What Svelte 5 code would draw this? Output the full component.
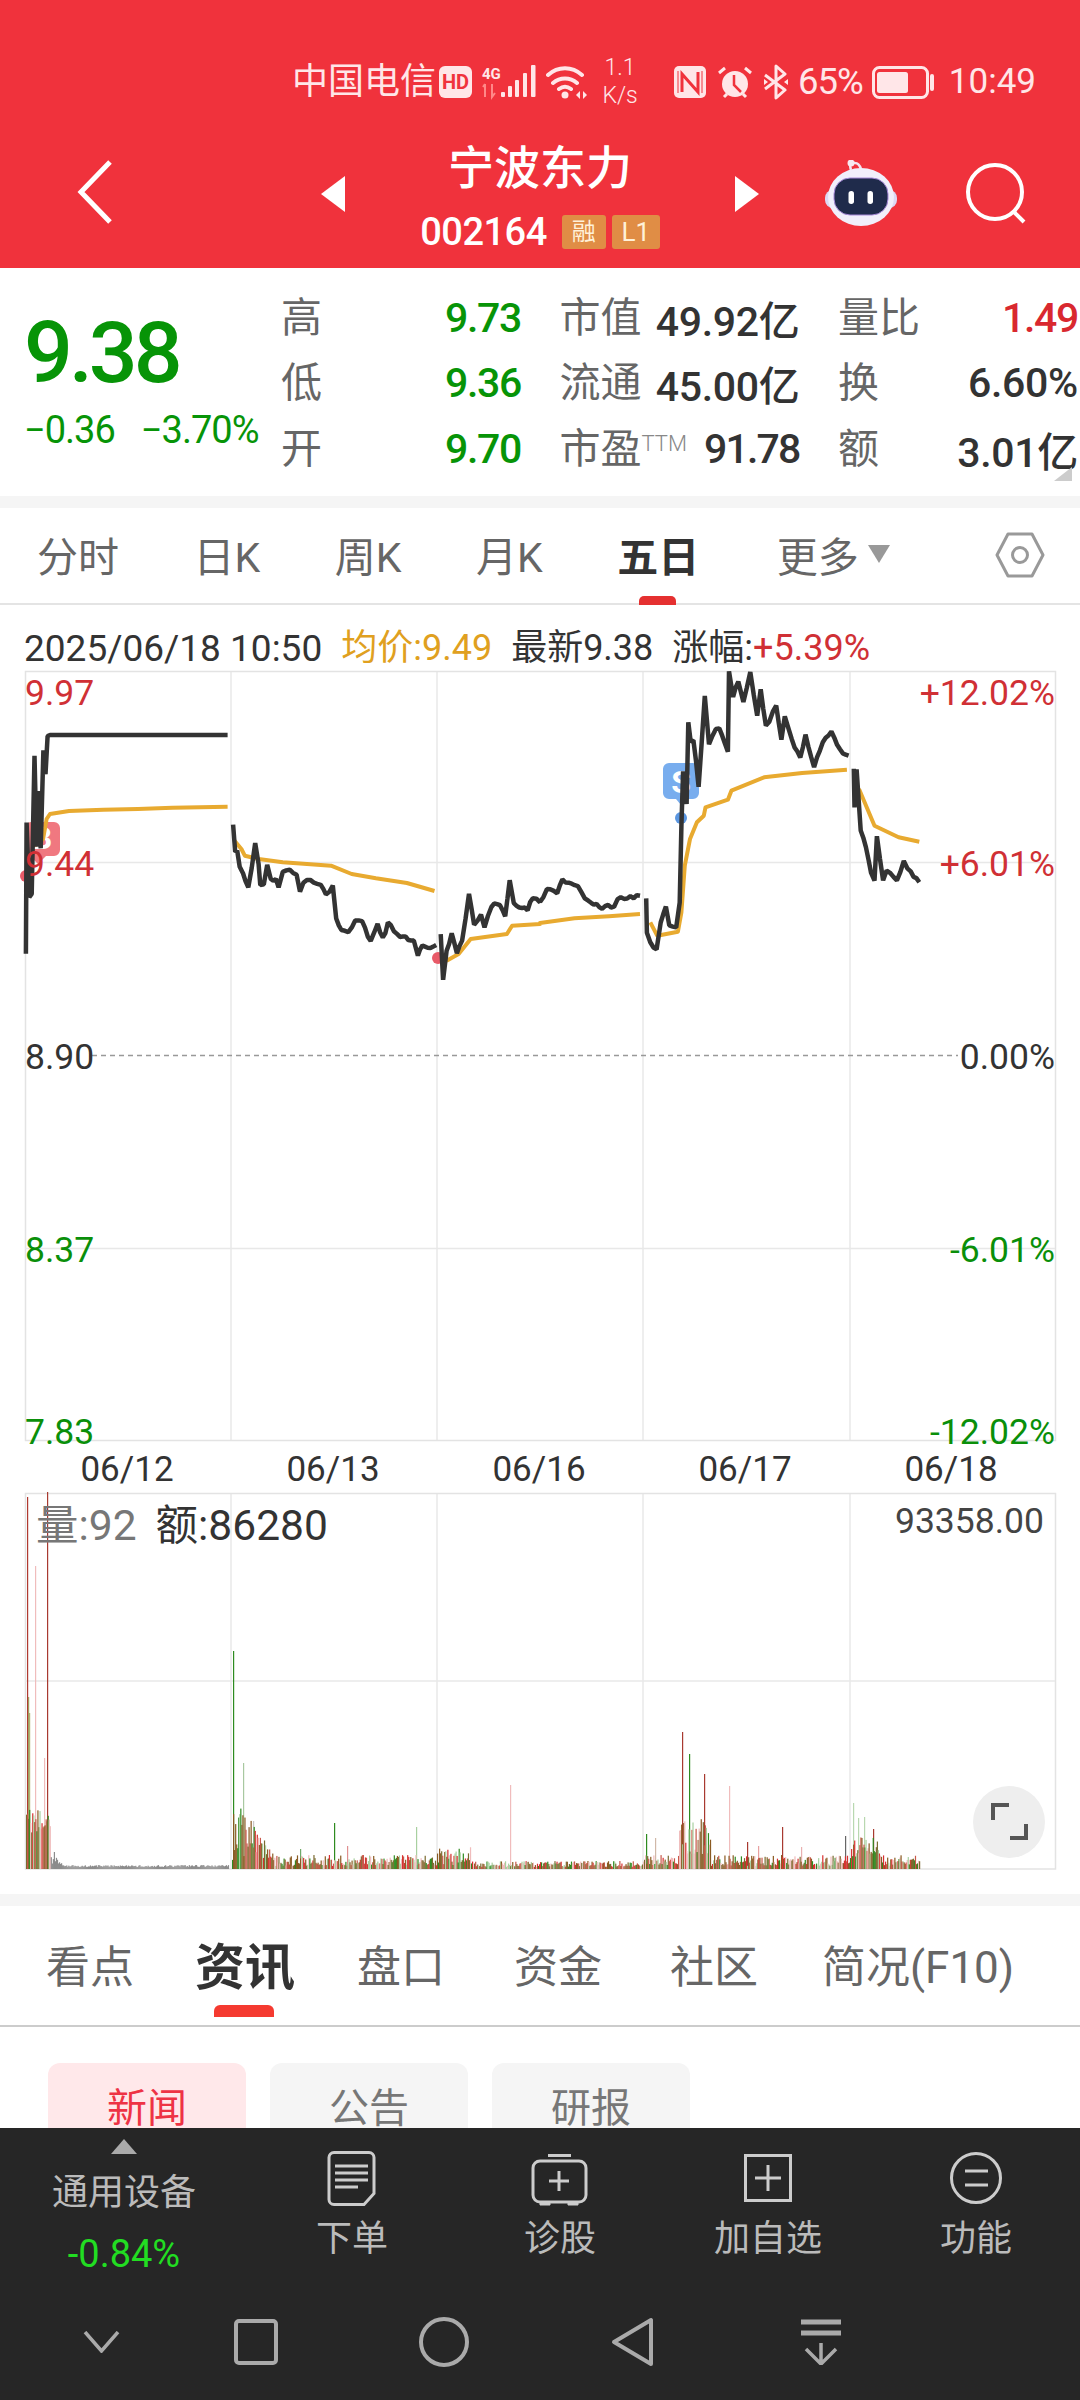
<script>
  const z3 = (a) => a.map(([x, y]) => `${(x / 2.9).toFixed(1)},${(660 + y / 3).toFixed(1)}`).join(' ');
  const z4 = (a) => a.map(([x, y]) => `${(540 + x / 2.9).toFixed(1)},${(660 + y / 3).toFixed(1)}`).join(' ');

  let seed = 20250618;
  const rnd = () => ((seed = (seed * 1664525 + 1013904223) >>> 0) / 4294967296);

  const jag = (s) => {
    const pts = s.trim().split(' ').map((p) => p.split(',').map(Number));
    const out = [];
    for (let i = 0; i < pts.length - 1; i++) {
      const [x0, y0] = pts[i];
      const [x1, y1] = pts[i + 1];
      const n = Math.max(1, Math.round(Math.abs(x1 - x0) / 3));
      for (let k = 0; k < n; k++) {
        const t = k / n;
        const flat = Math.abs(y1 - y0) < 0.5;
        const noise = flat ? 0 : (rnd() - 0.5) * 3.5;
        out.push(`${(x0 + (x1 - x0) * t).toFixed(1)},${(y0 + (y1 - y0) * t + noise).toFixed(1)}`);
      }
    }
    const last = pts[pts.length - 1];
    out.push(`${last[0]},${last[1]}`);
    return out.join(' ');
  };

  const black = [
    z3([[75,885],[77,490],[85,715],[92,700],[100,285],[106,560],[110,395],[118,570],[126,275],[132,350],[138,230],[145,228],[660,228]]),
    z3([[676,498],[682,580],[688,570],[695,625],[705,640],[712,670],[720,690],[730,630],[740,553],[750,620],[755,680],[765,675],[775,620],[785,660],[800,665],[808,690],[820,635],[840,630],[860,650],[870,700],[880,670],[900,665],[930,675],[945,710],[965,685],[975,780],[990,815],[1010,820],[1030,790],[1050,785],[1075,850],[1095,795],[1110,840],[1125,795],[1160,830],[1200,845],[1212,885],[1225,860],[1240,870],[1265,858]]),
    z3([[1278,825],[1285,960],[1295,880],[1310,825],[1325,885],[1340,840],[1360,708],[1375,795],[1395,770],[1405,800],[1425,740],[1450,735],[1465,775],[1478,662],[1490,735],[1530,750],[1545,715],[1566,730]]) + ' ' +
      z4([[0,730],[20,690],[50,700],[65,665],[110,680],[140,730],[180,745],[215,740],[225,720],[290,710]]),
    z4([[308,715],[310,820],[320,850],[338,872],[350,795],[365,745],[375,800],[395,810],[405,730],[410,500],[415,340],[425,430],[430,190],[437,250],[445,240],[460,380],[478,115],[490,260],[510,210],[520,210],[545,280],[548,40],[560,110],[575,65],[590,130],[610,40],[630,170],[640,90],[655,205],[685,140],[700,245],[710,170],[730,240],[755,300],[770,225],[795,325],[820,250],[845,220],[870,275],[895,290]]),
    z4([[910,330],[912,450],[918,330],[930,510],[945,560],[960,640],[970,670],[977,535],[995,665],[1005,630],[1035,665],[1055,610],[1075,640],[1100,670]])
  ].map(jag);
  const avg = [
    z3([[100,560],[125,540],[135,480],[145,465],[200,456],[300,452],[400,450],[500,446],[660,443]]),
    z3([[680,545],[700,570],[710,590],[750,600],[820,610],[960,620],[1020,645],[1090,658],[1180,672],[1260,696]]),
    z3([[1295,905],[1330,885],[1365,840],[1470,825],[1485,800],[1566,795]]) + ' ' + z4([[0,792],[100,778],[200,772],[290,765]]),
    z4([[320,790],[340,830],[400,818],[410,760],[420,620],[435,540],[455,490],[475,470],[480,445],[545,422],[555,395],[650,355],[760,342],[890,332]]),
    z4([[925,390],[970,500],[1040,535],[1100,548]])
  ];

  const palette = ['#d83030', '#2e8b20', '#8a5a22', '#f0bcbc', '#a8d0a0', '#7a6a30', '#c8584a', '#8a5a22'];
  const envelope = (x) => {
    if (x < 50) return [35, 60];
    if (x < 62) return [4, 24 - (x - 50) * 1.6];
    if (x < 228) return [2, 4];
    if (x < 232) return [0, 0];
    if (x < 275) return [8, Math.max(14, 75 - (x - 233) * 1.5)];
    if (x < 436) return [3, 14];
    if (x < 470) return [4, 22];
    if (x < 642) return [2, 8];
    if (x < 678) return [4, 14];
    if (x < 710) return [14, 50];
    if (x < 850) return [3, 14];
    if (x < 880) return [12, 32];
    return [3, 14];
  };
  const bars = [];
  for (let x = 26; x < 920; x += 1.03) {
    const [lo, hi] = envelope(x);
    const h = lo + rnd() * (hi - lo);
    const gray = x >= 50 && x < 228;
    const c = gray ? '#8c8c8c' : palette[Math.floor(rnd() * palette.length)];
    if (h > 0) bars.push({ x, y: 1869 - h, h, c });
  }
  const spikes = [
    [27,1497,'#b03a30'],[47,1492,'#a83a30'],[35,1566,'#f0bcbc'],[44,1758,'#f0bcbc'],[28,1697,'#a0a060'],[29,1713,'#b0b070'],
    [233,1651,'#2e8b20'],[243,1763,'#a8c8a0'],[253,1821,'#c8c8c8'],[334,1823,'#2e8b20'],[416,1827,'#a8d0a0'],[510,1785,'#f0bcbc'],[347,1846,'#e09090'],[300,1849,'#70a868'],
    [682,1732,'#a83a30'],[689,1754,'#2e8b20'],[704,1774,'#a83a30'],[729,1786,'#f0bcbc'],[782,1827,'#a83a30'],[747,1842,'#a83a30'],[758,1846,'#e8a0a0'],[801,1847,'#e8b0b0'],
    [853,1803,'#b8d8b0'],[858,1818,'#b8d8b0'],[864,1817,'#b8d8b0'],[873,1829,'#a83a30'],[845,1836,'#666'],[646,1834,'#2e8b20'],[655,1838,'#d0b8a8']
  ];
  const stats = [
    { l: '高', v: '9.73', c: 'up' }, { l: '市值', v: '49.92亿', c: '' }, { l: '量比', v: '1.49', c: 'red' },
    { l: '低', v: '9.36', c: 'up' }, { l: '流通', v: '45.00亿', c: '' }, { l: '换', v: '6.60%', c: '' },
    { l: '开', v: '9.70', c: 'up' }, { l: '市盈', s: 'TTM', v: '91.78', c: 'tight' }, { l: '额', v: '3.01亿', c: '' }
  ];
  const dates = ['06/12', '06/13', '06/16', '06/17', '06/18'];
  const vgrid = [231, 437, 643, 850];
</script>

<div class="page">
  <header class="head">
    <div class="status">
      <span class="carrier">中国电信</span>
      <svg class="s-hd" width="33" height="32" viewBox="0 0 33 32"><rect width="33" height="32" rx="6" fill="#ffe6e8"/><text x="16.5" y="23" text-anchor="middle" class="hd">HD</text></svg>
      <svg class="s-sig" width="56" height="36" viewBox="482 62 56 36">
        <text x="483" y="77" class="fg">4G</text>
        <path d="M486 82v13M484 85l2-3M493 82v13l3-4" stroke="#f88" stroke-width="2" fill="none"/>
        <g fill="#ffe6e8"><rect x="502" y="90" width="4" height="5" rx="1"/><rect x="509" y="84" width="4" height="11" rx="1"/><rect x="516" y="78" width="4" height="17" rx="1"/><rect x="524" y="71" width="4" height="24" rx="1"/><rect x="532" y="63" width="4.5" height="32" rx="1"/></g>
      </svg>
      <svg class="s-wifi" width="42" height="34" viewBox="546 62 42 34">
        <path d="M548 72c10-9 24-9 34 0M553 80c7-6 17-6 24 0M559 86c4-3 8-3 12 0" stroke="#ffe6e8" stroke-width="4" fill="none" stroke-linecap="round"/>
        <circle cx="565" cy="92" r="3.5" fill="#ffe6e8"/>
        <path d="M576 92l4-4v8zM587 92l-4-4v8z" fill="#ffe6e8"/>
      </svg>
      <span class="speed"><span>1.1</span><span>K/s</span></span>
      <svg class="s-nfc" width="32" height="32" viewBox="0 0 32 32"><rect width="32" height="32" rx="5" fill="#ffe6e8"/><path d="M8 26V8l16 18V6" stroke="#f0323c" stroke-width="3" fill="none"/><path d="M4 5v22M28 5v22" stroke="#f0323c" stroke-width="1"/></svg>
      <svg class="s-alarm" width="36" height="33" viewBox="0 0 36 33">
        <circle cx="18" cy="18" r="13" fill="#ffe6e8"/>
        <path d="M17 9v10l7 7" stroke="#f0323c" stroke-width="2.5" fill="none"/>
        <path d="M2 7l6-5M34 7l-6-5M7 31l3-3M29 31l-3-3" stroke="#ffe6e8" stroke-width="3" fill="none"/>
      </svg>
      <svg class="s-bt" width="26" height="36" viewBox="0 0 26 36"><path d="M2 11l20 15-9 8V2l9 8-20 15" stroke="#ffe6e8" stroke-width="3" fill="none" stroke-linejoin="round"/><path d="M1 15l4 3-4 3zM25 15l-4 3 4 3z" fill="#ffe6e8"/></svg>
      <span class="pct">65%</span>
      <svg class="s-bat" width="62" height="33" viewBox="0 0 62 33"><rect x="1.5" y="1.5" width="54" height="30" rx="6" fill="none" stroke="#ffe6e8" stroke-width="3"/><rect x="5" y="6" width="31" height="21" rx="2.5" fill="#ffe6e8"/><rect x="58" y="8" width="4" height="17" rx="2" fill="#ffe6e8"/></svg>
      <span class="time">10:49</span>
    </div>
    <div class="nav">
      <svg class="back" width="36" height="64" viewBox="0 0 36 64"><path d="M33 2L4 32l29 30" stroke="#fff" stroke-width="5" fill="none"/></svg>
      <svg class="tri-l" width="24" height="36" viewBox="0 0 24 36"><path d="M24 0v36L0 18z" fill="#fff"/></svg>
      <div class="title">
        <div class="name">宁波东力</div>
        <div class="code"><span class="num">002164</span><span class="tag tag-a">融</span><span class="tag tag-b">L1</span></div>
      </div>
      <svg class="tri-r" width="24" height="36" viewBox="0 0 24 36"><path d="M0 0v36l24-18z" fill="#fff"/></svg>
      <svg class="robot" width="72" height="66" viewBox="825 160 72 66">
        <path d="M851 170c-2-6 0-8 4-7 3 0 5 3 6 6" stroke="#f4e4f0" stroke-width="2.5" fill="none"/>
        <circle cx="851" cy="163" r="3.5" fill="#f8e8f0"/>
        <rect x="825" y="190" width="72" height="18" rx="8" fill="#dcd8f4"/>
        <ellipse cx="861" cy="197" rx="33" ry="29" fill="#f1effb"/>
        <rect x="834" y="178" width="54" height="37" rx="16" fill="#1f2b4b" stroke="#a78ad8" stroke-width="1"/>
        <rect x="848.5" y="191" width="5.5" height="13" rx="2.7" fill="#fff"/>
        <rect x="867.5" y="191" width="5.5" height="13" rx="2.7" fill="#fff"/>
      </svg>
      <svg class="search" width="64" height="66" viewBox="962 162 64 66"><circle cx="995" cy="193" r="27" stroke="#fff" stroke-width="4" fill="none"/><path d="M1013 212l11 11" stroke="#fff" stroke-width="4"/></svg>
    </div>
  </header>

  <section class="quote">
    <div class="price">
      <div class="big">9.38</div>
      <div class="delta"><span>−0.36</span><span>−3.70%</span></div>
    </div>
    <div class="stats">
      {#each stats as s}
        <div class="stat">
          <span class="lab">{s.l}{#if s.s}<sup>{s.s}</sup>{/if}</span>
          <span class="val {s.c}">{s.v}</span>
        </div>
      {/each}
    </div>
    <svg class="corner" width="18" height="14" viewBox="0 0 18 14"><path d="M18 0v14H0z" fill="#ccc"/></svg>
  </section>
  <div class="gap"></div>

  <nav class="tabs">
    <span class="tab">分时</span>
    <span class="tab">日K</span>
    <span class="tab">周K</span>
    <span class="tab">月K</span>
    <span class="tab on">五日</span>
    <span class="tab more">更多<svg width="22" height="18" viewBox="0 0 22 18"><path d="M0 0h22L11 18z" fill="#999"/></svg></span>
    <svg class="hex" width="50" height="46" viewBox="995 533 50 46"><path d="M1008 535h24l11 21-11 21h-24l-11-21z" fill="none" stroke="#999" stroke-width="3" stroke-linejoin="round"/><circle cx="1020" cy="556" r="7.5" fill="none" stroke="#999" stroke-width="3"/></svg>
  </nav>

  <div class="info">
    <span class="dark stamp">2025/06/18 10:50</span>
    <span class="gold">均价:9.49</span>
    <span class="dark">最新9.38</span>
    <span class="dark">涨幅:<span class="red">+5.39%</span></span>
  </div>

  <div class="chart">
    <svg width="1031" height="770" viewBox="25 672 1031 770">
      <rect x="25.5" y="672.5" width="1030" height="769" fill="none" stroke="#e3e3e3" stroke-width="1.5"/>
      {#each vgrid as x}<line x1={x} x2={x} y1="672" y2="1441" stroke="#e3e3e3" stroke-width="1.2"/>{/each}
      <line x1="25" x2="1055" y1="863.5" y2="863.5" stroke="#e8e8e8" stroke-width="1.5"/>
      <line x1="25" x2="1055" y1="1249.5" y2="1249.5" stroke="#e8e8e8" stroke-width="1.5"/>
      <line x1="92" x2="958" y1="1056.5" y2="1056.5" stroke="#999" stroke-width="1.5" stroke-dasharray="5 4"/>

      <path d="M31 823h23a6 6 0 0 1 6 6v22a6 6 0 0 1-6 6H46l-8 8-8-8h-5v-28a6 6 0 0 1 6-6z" fill="#f07880"/>
      <text x="42" y="850" class="mark">B</text>
      <circle cx="26" cy="877" r="6" fill="#e85a68"/>
      <circle cx="438" cy="959" r="6" fill="#e85a68"/>
      <path d="M669 764h24a6 6 0 0 1 6 6v24a6 6 0 0 1-6 6h-7l-5 6-5-6h-7a6 6 0 0 1-6-6v-24a6 6 0 0 1 6-6z" fill="#78adee"/>
      <text x="681" y="794" class="mark">S</text>
      <circle cx="681" cy="819" r="6" fill="#5a96e0"/>

      {#each avg as p}<polyline points={p} fill="none" stroke="#e8aa30" stroke-width="4" stroke-linejoin="round"/>{/each}
      {#each black as p}<polyline points={p} fill="none" stroke="#333" stroke-width="4.500" stroke-linejoin="bevel"/>{/each}
    </svg>
    <span class="lbl l y1 red">9.97</span>
    <span class="lbl l y2 red">9.44</span>
    <span class="lbl l y3 dark">8.90</span>
    <span class="lbl l y4 up">8.37</span>
    <span class="lbl l y5 up">7.83</span>
    <span class="lbl r y1 red">+12.02%</span>
    <span class="lbl r y2 red">+6.01%</span>
    <span class="lbl r y3 dark">0.00%</span>
    <span class="lbl r y4 up">-6.01%</span>
    <span class="lbl r y5 up">-12.02%</span>
  </div>

  <div class="dates">
    {#each dates as d}<span>{d}</span>{/each}
  </div>

  <div class="vol">
    <svg width="1031" height="378" viewBox="25 1492 1031 378">
      <rect x="25.5" y="1493.5" width="1030" height="375.5" fill="none" stroke="#e3e3e3" stroke-width="1.5"/>
      {#each vgrid as x}<line x1={x} x2={x} y1="1493" y2="1869" stroke="#e3e3e3" stroke-width="1.2"/>{/each}
      <line x1="25" x2="1055" y1="1681" y2="1681" stroke="#e8e8e8" stroke-width="1.5"/>
      {#each spikes as s}<rect x={s[0]} y={s[1]} width="1.2" height={1869 - s[1]} fill={s[2]}/>{/each}
      {#each bars as b}<rect x={b.x} y={b.y} width="1.2" height={b.h} fill={b.c}/>{/each}
    </svg>
    <div class="vtext"><span class="grey">量:92</span><span class="dark">额:86280</span></div>
    <span class="vmax">93358.00</span>
    <button class="expand" aria-label="expand">
      <svg width="40" height="38" viewBox="990 1804 40 38"><path d="M994 1821v-15h16M1027 1825v14h-16" fill="none" stroke="#555" stroke-width="4"/></svg>
    </button>
  </div>
  <div class="gap second"></div>

  <nav class="tabs2">
    <span class="tb">看点</span>
    <span class="tb on">资讯</span>
    <span class="tb">盘口</span>
    <span class="tb">资金</span>
    <span class="tb">社区</span>
    <span class="tb">简况(F10)</span>
  </nav>

  <div class="chips">
    <span class="chip act">新闻</span>
    <span class="chip">公告</span>
    <span class="chip">研报</span>
  </div>

  <footer class="bar">
    <div class="actions">
      <div class="sector">
        <svg width="26" height="15" viewBox="0 0 26 15"><path d="M13 0l13 15H0z" fill="#aaa"/></svg>
        <span class="sname">通用设备</span>
        <span class="schg">-0.84%</span>
      </div>
      <div class="act-item">
        <svg width="50" height="56" viewBox="328 2152 50 56"><path d="M335 2153.5h35a5 5 0 0 1 5 5v36l-10 11h-30a5 5 0 0 1-5-5v-42a5 5 0 0 1 5-5z" fill="none" stroke="#ccc" stroke-width="3"/><path d="M336 2167h33M336 2174h33M336 2181h33M336 2188h23" stroke="#ccc" stroke-width="3"/></svg>
        <span>下单</span>
      </div>
      <div class="act-item">
        <svg width="60" height="56" viewBox="530 2152 60 56"><rect x="533" y="2162" width="53" height="41" rx="7" fill="none" stroke="#ccc" stroke-width="3"/><path d="M548 2156.5h23M559 2172v20M549 2182h20" stroke="#ccc" stroke-width="3"/><path d="M540 2203h10v3h-10zM568 2203h10v3h-10z" fill="#ccc" stroke="#ccc"/></svg>
        <span>诊股</span>
      </div>
      <div class="act-item">
        <svg width="50" height="56" viewBox="742 2152 50 56"><rect x="744.5" y="2156.5" width="45" height="45" fill="none" stroke="#ccc" stroke-width="3"/><path d="M767 2166v26M754 2179h26" stroke="#ccc" stroke-width="3"/></svg>
        <span>加自选</span>
      </div>
      <div class="act-item">
        <svg width="54" height="56" viewBox="948 2152 54 56"><circle cx="975" cy="2179" r="24.5" fill="none" stroke="#ccc" stroke-width="3"/><path d="M964 2172h23M964 2186h23" stroke="#ccc" stroke-width="3"/></svg>
        <span>功能</span>
      </div>
    </div>
    <div class="sysnav">
      <svg class="n1" width="37" height="22" viewBox="0 0 37 22"><path d="M2 1l16.500 19L35 1" fill="none" stroke="#aaa" stroke-width="3.500"/></svg>
      <svg class="n2" width="44" height="46" viewBox="0 0 44 46"><rect x="2" y="2" width="40" height="42" rx="3" fill="none" stroke="#aaa" stroke-width="4"/></svg>
      <svg class="n3" width="50" height="50" viewBox="0 0 50 50"><circle cx="25" cy="25" r="23" fill="none" stroke="#aaa" stroke-width="4"/></svg>
      <svg class="n4" width="42" height="50" viewBox="0 0 42 50"><path d="M40 3v44L3 25z" fill="none" stroke="#aaa" stroke-width="4" stroke-linejoin="round"/></svg>
      <svg class="n5" width="42" height="46" viewBox="0 0 42 46"><path d="M1 3h40M1 14h40" stroke="#aaa" stroke-width="5"/><path d="M21 24v21M6 30l15 15 15-15" fill="none" stroke="#aaa" stroke-width="3.500"/></svg>
    </div>
  </footer>
</div>

<style>
  :global(body) { margin: 0; background: #fff; }
  .page {
    width: 1080px; height: 2400px; overflow: hidden; position: relative;
    display: flex; flex-direction: column;
    font-family: Roboto, "Noto Sans CJK SC", sans-serif;
    color: #333;
  }
  .head { background: #f0323c; height: 268px; flex: none; color: #fff; }
  .status { height: 120px; padding: 44px 44px 0 0; box-sizing: border-box; display: flex; justify-content: flex-end; align-items: center; color: #ffe6e8; }
  .carrier { font-size: 36px; line-height: 40px; margin-right: 3px; }
  .hd { font: 700 20px Roboto, sans-serif; fill: #f0323c; }
  .fg { font: 700 15px Roboto, sans-serif; fill: #ffe6e8; }
  .s-sig { margin-left: 9px; }
  .s-wifi { margin-left: 9px; }
  .speed { display: flex; flex-direction: column; align-items: center; font-size: 23px; line-height: 28px; margin-left: 12px; width: 40px; font-weight: 300; }
  .s-nfc { margin-left: 34px; }
  .s-alarm { margin-left: 11px; }
  .s-bt { margin-left: 10px; }
  .pct { font-size: 36.500px; line-height: 40px; margin-left: 9px; letter-spacing: -1px; }
  .s-bat { margin-left: 9px; }
  .time { font-size: 35px; line-height: 40px; margin-left: 15px; }

  .nav { height: 148px; display: flex; align-items: center; position: relative; }
  .back { margin-left: 77px; margin-top: -4px; }
  .tri-l { margin-left: 208px; }
  .title { width: 390px; display: flex; flex-direction: column; align-items: center; align-self: flex-start; margin-top: 20px; }
  .name { font-size: 46px; line-height: 56px; font-weight: 500; }
  .code { display: flex; align-items: center; height: 40px; margin-top: 16px; }
  .num { font-size: 38px; font-weight: 500; letter-spacing: -0.5px; margin-right: 15px; }
  .tag { background: #e08d45; color: #fff1d8; font-size: 26px; height: 34px; line-height: 34px; text-align: center; border-radius: 3px; }
  .tag-a { width: 44px; font-size: 24px; }
  .tag-b { width: 48px; margin-left: 6px; }
  .robot { margin-left: 66px; margin-top: -2px; }
  .search { margin-left: 65px; }

  .quote { height: 228px; flex: none; position: relative; display: flex; box-sizing: border-box; }
  .price { width: 281px; padding-left: 24px; box-sizing: border-box; flex: none; }
  .big { font-size: 86px; font-weight: 500; line-height: 90px; letter-spacing: -4px; color: #079407; margin-top: 40px; }
  .delta { display: flex; gap: 26px; font-size: 38px; line-height: 44px; color: #079407; margin-top: 10px; letter-spacing: -1px; white-space: nowrap; }
  .stats { display: grid; grid-template-columns: 240px 240px 240px; column-gap: 38.500px; grid-auto-rows: 65.500px; padding-top: 17px; }
  .stat { display: flex; justify-content: space-between; align-items: center; white-space: nowrap; }
  .lab { font-size: 41px; color: #666; line-height: 50px; position: relative; }
  .lab sup { font-size: 22px; color: #888; font-weight: 300; vertical-align: 12px; line-height: 0; }
  .val { font-size: 41px; font-weight: 500; color: #333; letter-spacing: -0.300px; }
  .val.up, .val.red { letter-spacing: -1.300px; }
  .val.tight { letter-spacing: -1.800px; }
  .val.up { color: #079407; }
  .val.red { color: #d9282f; }
  .corner { position: absolute; right: 8px; top: 199px; }

  .gap { height: 12px; background: #f5f5f5; flex: none; }
  .gap.second { margin-top: 25px; }

  .tabs { height: 97px; flex: none; box-sizing: border-box; border-bottom: 2px solid #e4e4e4; display: flex; align-items: center; padding: 5px 0 0 37px; gap: 74.500px; position: relative; }
  .tab { font-size: 41px; color: #666; position: relative; line-height: 50px; display: flex; align-items: center; white-space: nowrap; }
  .tab.on { color: #333; font-weight: 700; }
  .tab.on::after { content: ""; position: absolute; left: 22px; bottom: -22px; width: 37px; height: 9px; border-radius: 5px 5px 0 0; background: #e53030; }
  .tab.more { margin-left: 3px; }
  .tab.more svg { margin-left: 9px; margin-top: -8px; }
  .hex { position: absolute; right: 35px; top: 24px; }

  .info { height: 66px; flex: none; display: flex; align-items: flex-end; padding: 0 0 0 24px; gap: 19px; font-size: 36px; line-height: 45px; white-space: nowrap; box-sizing: border-box; }
  .stamp { font-size: 37px; }
  .dark { color: #333; }
  .gold { color: #e0a020; }
  .red { color: #d03035; }
  .up { color: #0a8f0a; }

  .chart { position: relative; margin-left: 25px; width: 1031px; height: 770px; flex: none; }
  .chart svg, .vol svg { display: block; overflow: visible; }
  .mark { font: 700 32px Roboto, sans-serif; fill: #fff; text-anchor: middle; }
  .lbl { position: absolute; font-size: 35.500px; line-height: 40px; white-space: nowrap; }
  .lbl.l { left: 0; }
  .lbl.r { right: 1px; }
  .y1 { top: 2px; }
  .y2 { top: 173px; }
  .y3 { top: 366px; }
  .y4 { top: 559px; }
  .y5 { top: 741px; }
  .dates { height: 51px; flex: none; display: grid; grid-template-columns: repeat(5, 206px); padding-left: 24px; font-size: 35px; line-height: 58px; color: #333; text-align: center; }

  .vol { position: relative; margin-left: 25px; width: 1031px; height: 377px; flex: none; }
  .vtext { position: absolute; left: 11px; top: 10px; display: flex; gap: 19px; font-size: 42.500px; line-height: 48px; }
  .grey { color: #777; }
  .vmax { position: absolute; right: 12px; top: 7px; font-size: 35.500px; line-height: 44px; color: #444; }
  .expand { position: absolute; left: 948px; top: 294px; width: 72px; height: 72px; border-radius: 50%; background: #eee; border: 0; padding: 0; display: flex; align-items: center; justify-content: center; }

  .tabs2 { height: 121px; flex: none; box-sizing: border-box; border-bottom: 2px solid #ccc; display: flex; align-items: center; padding: 5px 0 0 46px; position: relative; }
  .tb { font-size: 44px; color: #666; line-height: 60px; position: relative; white-space: nowrap; margin-right: 66px; }
  .tb:nth-child(1) { margin-right: 61px; }
  .tb:nth-child(3) { margin-right: 69px; }
  .tb:nth-child(4) { margin-right: 68px; }
  .tb:nth-child(5) { margin-right: 64px; }
  .tb.on { font-size: 50px; font-weight: 700; color: #333; margin-right: 62px; }
  .tb.on::after { content: ""; position: absolute; left: 19px; top: 67px; width: 60px; height: 12px; background: #f53a30; border-radius: 6px 6px 0 0; }

  .chips { height: 101px; flex: none; overflow: hidden; display: flex; gap: 24px; padding: 36px 0 0 48px; box-sizing: border-box; }
  .chip { width: 198px; height: 100px; border-radius: 12px; background: #f5f5f5; color: #777; font-size: 40px; text-align: center; line-height: 92px; flex: none; }
  .chip.act { background: #ffe8ea; color: #ee3344; }

  .bar { flex: 1; background: #262626; display: flex; flex-direction: column; color: #bbb; }
  .actions { height: 161px; display: grid; grid-template-columns: 248px repeat(4, 208px); flex: none; }
  .sector { display: flex; flex-direction: column; align-items: center; padding-top: 11px; }
  .sname { font-size: 36px; line-height: 44px; margin-top: 17px; }
  .schg { font-size: 38px; line-height: 44px; color: #22dd22; margin-top: 17px; }
  .act-item { display: flex; flex-direction: column; align-items: center; padding-top: 23px; font-size: 36px; line-height: 44px; }
  .act-item svg { margin-bottom: 10px; }
  .sysnav { flex: 1; display: flex; align-items: center; padding-bottom: 6px; box-sizing: border-box; }
  .n1 { margin-left: 83px; }
  .n2 { margin-left: 114px; }
  .n3 { margin-left: 141px; }
  .n4 { margin-left: 142px; }
  .n5 { margin-left: 147px; }
</style>
